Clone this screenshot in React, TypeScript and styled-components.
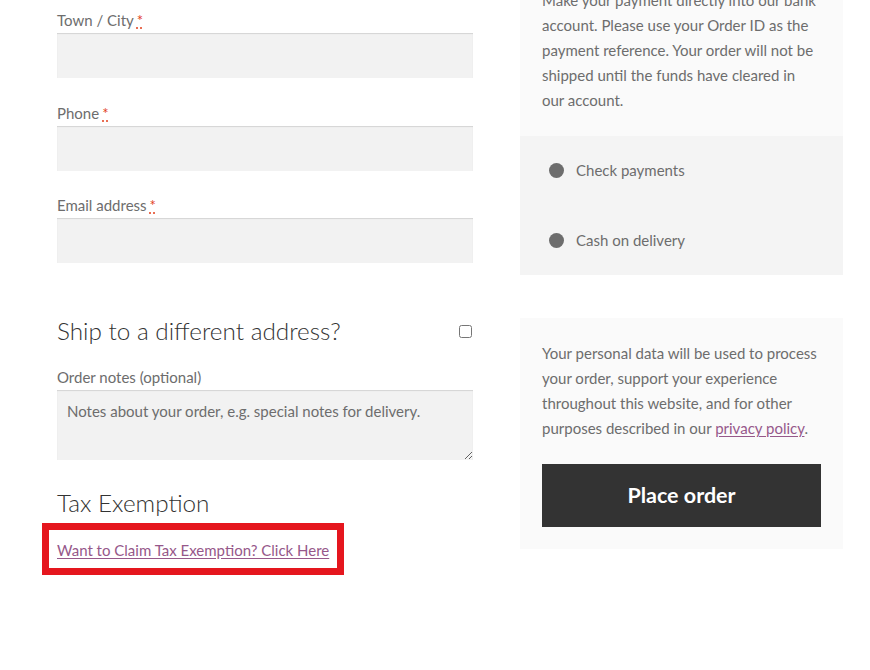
import React from "react"
import styled, { createGlobalStyle } from "styled-components"

const GlobalStyle = createGlobalStyle`
  html, body {
    margin: 0;
    padding: 0;
    background: #ffffff;
  }
  body {
    font-family: Lato, "Liberation Sans", sans-serif;
    font-size: 15px;
    line-height: 25px;
    color: #6d6d6d;
    overflow: hidden;
  }
`

const Page = styled.div`
  display: grid;
  grid-template-columns: 416px 323px;
  column-gap: 47px;
  align-items: start;
  padding-left: 57px;
  margin-top: -32px;
`

const LeftColumn = styled.div`
  display: flex;
  flex-direction: column;
  padding-top: 40px;
`

const RightColumn = styled.div`
  display: flex;
  flex-direction: column;
`

const Field = styled.div<{ $gap?: number }>`
  display: flex;
  flex-direction: column;
  margin-bottom: ${(p) => p.$gap ?? 22}px;
`

const Label = styled.label`
  display: block;
  height: 25px;
  line-height: 25px;
  font-size: 15px;
  color: #6d6d6d;
  white-space: nowrap;
`

const Required = styled.abbr`
  color: #e2401c;
  text-decoration: underline dotted;
  text-underline-offset: 2px;
  margin-left: 3px;
  cursor: help;
`

const TextInput = styled.input`
  box-sizing: border-box;
  width: 100%;
  height: 45px;
  border: 0;
  margin: 0;
  padding: 0 10px;
  background: #f2f2f2;
  box-shadow: inset 0 1px 1px rgba(0, 0, 0, 0.125);
  font: inherit;
  color: #43454b;
  outline: none;
`

const TextArea = styled.textarea`
  box-sizing: border-box;
  width: 100%;
  height: 70px;
  border: 0;
  margin: 0;
  padding: 9px 10px;
  background: #f2f2f2;
  box-shadow: inset 0 1px 1px rgba(0, 0, 0, 0.125);
  font: inherit;
  font-size: 15px;
  line-height: 25px;
  color: #43454b;
  outline: none;
  display: block;
  &::placeholder {
    color: #6d6d6d;
    opacity: 1;
  }
`

const HeadingRow = styled.div`
  display: flex;
  align-items: center;
  justify-content: space-between;
  margin-top: 50px;
  margin-bottom: 16px;
`

const Heading = styled.h3`
  margin: 0;
  font-size: 24.3px;
  line-height: 36px;
  font-weight: 300;
  color: #333333;
`

const Checkbox = styled.input`
  width: 13px;
  height: 13px;
  margin: 1px 1px 0 0;
`

const TaxHeading = styled(Heading)`
  margin-top: 25px;
`

const Highlight = styled.div`
  align-self: flex-start;
  margin: 2px 0 0 -15px;
  border: 7px solid #e5161e;
  padding: 8px 8px 5px 8px;
  background: #ffffff;
`

const Link = styled.a`
  color: #96588a;
  text-decoration: underline;
  text-underline-offset: 2px;
  font-size: 15px;
  line-height: 25px;
  white-space: nowrap;
`

const InfoPanel = styled.div`
  background: #fafafa;
  padding: 20px 22px 23px 22px;
`

const Paragraph = styled.p`
  margin: 0;
  font-size: 15px;
  line-height: 25px;
  color: #6d6d6d;
`

const MethodList = styled.ul`
  list-style: none;
  margin: 0;
  padding: 0;
  background: #f4f4f4;
`

const Method = styled.li`
  display: flex;
  align-items: center;
  gap: 12px;
  height: 69.5px;
  padding-left: 29px;
  color: #6d6d6d;
`

const RadioDot = styled.span`
  width: 15px;
  height: 15px;
  border-radius: 50%;
  background: #6d6d6d;
  flex-shrink: 0;
`

const TermsPanel = styled.div`
  margin-top: 43px;
  background: #fafafa;
  padding: 23px 22px 22px 22px;
`

const PlaceOrder = styled.button`
  display: block;
  width: 279px;
  height: 63px;
  margin-top: 22.5px;
  border: 0;
  background: #333333;
  color: #ffffff;
  font-family: Lato, "Liberation Sans", sans-serif;
  font-weight: 700;
  font-size: 21.5px;
  cursor: pointer;
`

export default function App() {
  const fields = [
    { id: "city", label: "Town / City" },
    { id: "phone", label: "Phone" },
    { id: "email", label: "Email address" },
  ]

  return (
    <>
      <GlobalStyle />
      <Page>
        <LeftColumn>
          {fields.map((f, i) => (
            <Field key={f.id} $gap={i === fields.length - 1 ? 0 : 22.5}>
              <Label htmlFor={f.id}>
                {f.label}
                <Required title="required">*</Required>
              </Label>
              <TextInput id={f.id} type="text" />
            </Field>
          ))}

          <HeadingRow>
            <Heading>Ship to a different address?</Heading>
            <Checkbox type="checkbox" />
          </HeadingRow>

          <Field $gap={0}>
            <Label htmlFor="notes">Order notes (optional)</Label>
            <TextArea
              id="notes"
              placeholder="Notes about your order, e.g. special notes for delivery."
            />
          </Field>

          <TaxHeading>Tax Exemption</TaxHeading>
          <Highlight>
            <Link href="#">Want to Claim Tax Exemption? Click Here</Link>
          </Highlight>
        </LeftColumn>

        <RightColumn>
          <InfoPanel>
            <Paragraph>
              Make your payment directly into our bank account. Please use your
              Order ID as the payment reference. Your order will not be shipped
              until the funds have cleared in our account.
            </Paragraph>
          </InfoPanel>
          <MethodList>
            <Method>
              <RadioDot />
              Check payments
            </Method>
            <Method>
              <RadioDot />
              Cash on delivery
            </Method>
          </MethodList>

          <TermsPanel>
            <Paragraph>
              Your personal data will be used to process your order, support
              your experience throughout this website, and for other purposes
              described in our <Link href="#">privacy policy</Link>.
            </Paragraph>
            <PlaceOrder type="button">Place order</PlaceOrder>
          </TermsPanel>
        </RightColumn>
      </Page>
    </>
  )
}
